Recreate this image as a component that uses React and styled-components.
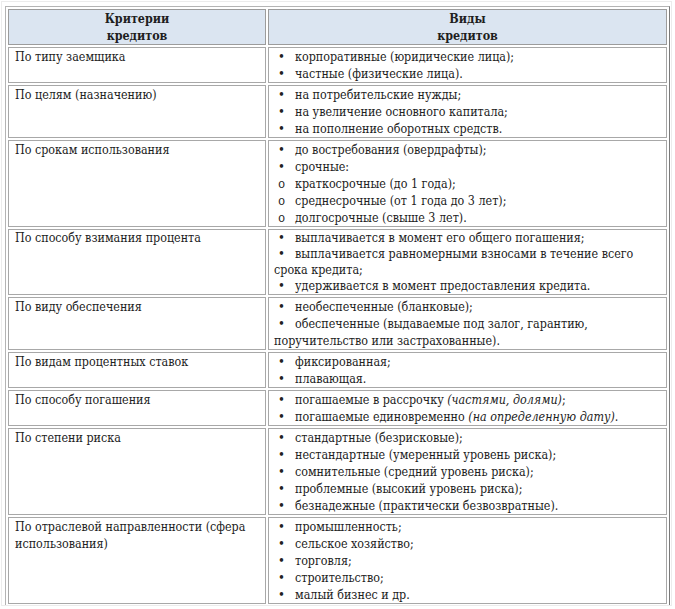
import React from 'react';
import styled, { createGlobalStyle } from 'styled-components';

const GlobalStyle = createGlobalStyle`
  html, body {
    margin: 0;
    padding: 0;
    background: #ffffff;
  }
`;

const serif = '"DejaVu Serif", "Liberation Serif", serif';

const Frame = styled.div`
  width: 671px;
  height: 605px;
  margin: 1px 0 0 1px;
  border: 1px solid #ececec;
  padding: 4px 0 0 3px;
  box-sizing: border-box;
  overflow: hidden;
`;

const Table = styled.table`
  width: 665px;
  table-layout: fixed;
  border-collapse: separate;
  border-spacing: 2px;
  border: 1px solid;
  border-color: #b4b4b4 #7a7a7a #7a7a7a #b4b4b4;
  font-family: ${serif};
  font-stretch: condensed;
  font-size: 12.4px;
  line-height: 17px;
  color: #222222;
`;

const HeadCell = styled.th`
  background: #dbe5f1;
  border: 1px solid #9c9c9c;
  padding: 0 6px;
  font-weight: bold;
  text-align: center;
  vertical-align: top;
  color: #1e1e1e;
`;

const Cell = styled.td`
  border: 1px solid #a8a8a8;
  padding: 0 ${(p) => (p.$list ? '5px' : '6px')};
  vertical-align: top;
  line-height: ${(p) => (p.$tight ? '16px' : '17px')};
`;

const Item = styled.div`
  margin: 0;

  &::before {
    content: '${(p) => (p.$circle ? 'o' : '•')}';
    display: inline-block;
    width: 17px;
    margin-left: 4px;
    line-height: 1;
    font-family: ${(p) => (p.$circle ? '"Liberation Mono", "Courier New", monospace' : 'inherit')};
    font-size: ${(p) => (p.$circle ? '12px' : '13px')};
  }
`;

const Note = styled.i`
  font-style: italic;
`;

const rows = [
  {
    title: 'По типу заемщика',
    items: ['корпоративные (юридические лица);', 'частные (физические лица).'],
  },
  {
    title: 'По целям (назначению)',
    items: [
      'на потребительские нужды;',
      'на увеличение основного капитала;',
      'на пополнение оборотных средств.',
    ],
  },
  {
    title: 'По срокам использования',
    items: [
      'до востребования (овердрафты);',
      'срочные:',
      { circle: true, text: 'краткосрочные (до 1 года);' },
      { circle: true, text: 'среднесрочные (от 1 года до 3 лет);' },
      { circle: true, text: 'долгосрочные (свыше 3 лет).' },
    ],
  },
  {
    title: 'По способу взимания процента',
    tight: true,
    items: [
      'выплачивается в момент его общего погашения;',
      'выплачивается равномерными взносами в течение всего срока кредита;',
      'удерживается в момент предоставления кредита.',
    ],
  },
  {
    title: 'По виду обеспечения',
    items: [
      'необеспеченные (бланковые);',
      'обеспеченные (выдаваемые под залог, гарантию, поручительство или застрахованные).',
    ],
  },
  {
    title: 'По видам процентных ставок',
    items: ['фиксированная;', 'плавающая.'],
  },
  {
    title: 'По способу погашения',
    items: [
      <>
        погашаемые в рассрочку <Note>(частями, долями)</Note>;
      </>,
      <>
        погашаемые единовременно <Note>(на определенную дату)</Note>.
      </>,
    ],
  },
  {
    title: 'По степени риска',
    items: [
      'стандартные (безрисковые);',
      'нестандартные (умеренный уровень риска);',
      'сомнительные (средний уровень риска);',
      'проблемные (высокий уровень риска);',
      'безнадежные (практически безвозвратные).',
    ],
  },
  {
    title: 'По отраслевой направленности (сфера использования)',
    items: [
      'промышленность;',
      'сельское хозяйство;',
      'торговля;',
      'строительство;',
      'малый бизнес и др.',
    ],
  },
];

function ListItem({ item }) {
  const circle = Boolean(item && item.circle);
  return <Item $circle={circle}>{circle ? item.text : item}</Item>;
}

export default function App() {
  return (
    <>
      <GlobalStyle />
      <Frame>
        <Table>
          <colgroup>
            <col style={{ width: 258 }} />
            <col />
          </colgroup>
          <thead>
            <tr>
              <HeadCell>
                Критерии
                <br />
                кредитов
              </HeadCell>
              <HeadCell>
                Виды
                <br />
                кредитов
              </HeadCell>
            </tr>
          </thead>
          <tbody>
            {rows.map((row) => (
              <tr key={row.title}>
                <Cell $tight={row.tight}>{row.title}</Cell>
                <Cell $list $tight={row.tight}>
                  {row.items.map((item, i) => (
                    <ListItem key={i} item={item} />
                  ))}
                </Cell>
              </tr>
            ))}
          </tbody>
        </Table>
      </Frame>
    </>
  );
}
